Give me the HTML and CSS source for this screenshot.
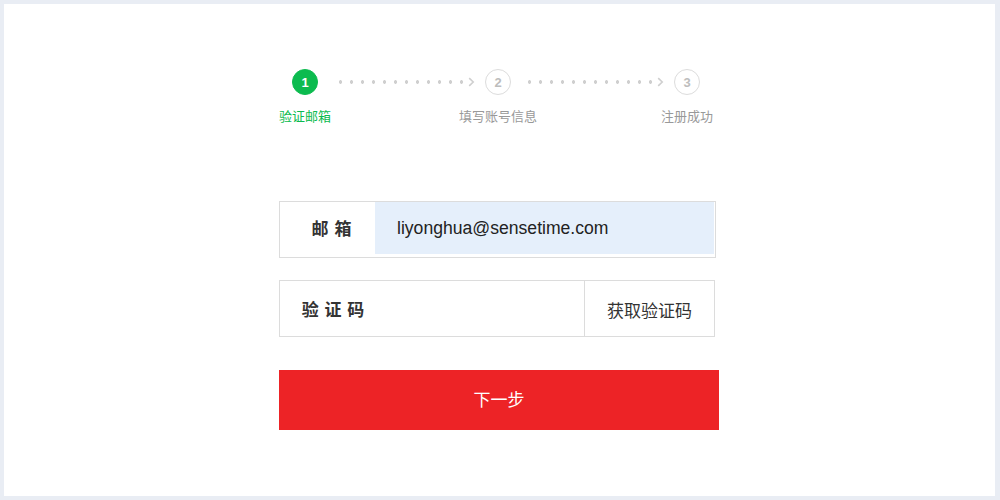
FILE: index.html
```html
<!DOCTYPE html>
<html lang="zh-CN">
<head>
<meta charset="utf-8">
<title>注册 - 验证邮箱</title>
<link rel="stylesheet" href="styles.css">
</head>
<body>
<div class="panel">
  <div class="content">
    <div class="steps">
      <div class="step active">
        <div class="circle">1</div>
        <div class="step-label">验证邮箱</div>
      </div>
      <div class="connector wide">
        <span class="dots"></span>
        <svg class="chevron" width="7" height="10" viewBox="0 0 7 10"><path d="M1.2 1.2 L5.2 5 L1.2 8.8" fill="none" stroke="#cfcfcf" stroke-width="1.6"/></svg>
      </div>
      <div class="step">
        <div class="circle">2</div>
        <div class="step-label">填写账号信息</div>
      </div>
      <div class="connector">
        <span class="dots"></span>
        <svg class="chevron" width="7" height="10" viewBox="0 0 7 10"><path d="M1.2 1.2 L5.2 5 L1.2 8.8" fill="none" stroke="#cfcfcf" stroke-width="1.6"/></svg>
      </div>
      <div class="step">
        <div class="circle">3</div>
        <div class="step-label">注册成功</div>
      </div>
    </div>

    <div class="form">
      <div class="field">
        <div class="field-label">邮 箱</div>
        <div class="field-input filled">liyonghua@sensetime.com</div>
      </div>
      <div class="field code">
        <div class="field-label">验 证 码</div>
        <div class="field-input"></div>
        <div class="code-btn">获取验证码</div>
      </div>
      <div class="submit">下一步</div>
    </div>
  </div>
</div>
</body>
</html>
```

FILE: styles.css
```css
* { box-sizing: border-box; }
html, body { margin: 0; padding: 0; }
body {
  background: #e9edf4;
  font-family: "Noto Sans CJK SC", "Noto Sans", sans-serif;
  width: 1000px;
  height: 500px;
  overflow: hidden;
}
.panel {
  margin: 4px 5px 0 4px;
  height: 492px;
  background: #fff;
  padding-top: 65px;
}
.content {
  width: 440px;
  margin-left: 275px;
}
.steps {
  display: flex;
  align-items: flex-start;
  width: 408px;
  margin-left: 13px;
}
.step {
  width: 26px;
  display: flex;
  flex-direction: column;
  align-items: center;
}
.circle {
  width: 26px;
  height: 26px;
  border-radius: 50%;
  border: 1.5px solid #dcdcdc;
  color: #bdbdbd;
  font-family: "Liberation Sans", Arial, sans-serif;
  font-weight: bold;
  font-size: 13px;
  display: flex;
  align-items: center;
  justify-content: center;
}
.step.active .circle {
  background: #0cbb4f;
  border-color: #0cbb4f;
  color: #fff;
}
.step-label {
  white-space: nowrap;
  margin-top: 12px;
  font-size: 13px;
  line-height: 18px;
  color: #999;
}
.step.active .step-label { color: #0cbb4f; }
.connector {
  flex: 1;
  height: 26px;
  display: flex;
  align-items: center;
  justify-content: flex-end;
  padding-right: 10px;
}
.connector.wide { flex: 0 0 167px; }
.dots {
  width: 132px;
  height: 4px;
  background: radial-gradient(circle at 5.5px 2px, #cfcfcf 1.5px, transparent 2px) repeat-x;
  background-size: 11px 4px;
}
.chevron { margin-left: 1px; display: block; }

.form { margin-top: 76px; }
.field {
  width: 437px;
  height: 57px;
  border: 1px solid #dcdcdc;
  display: flex;
  align-items: flex-start;
  margin-bottom: 22px;
}
.field-label {
  width: 95px;
  padding-left: 8px;
  height: 52px;
  line-height: 52px;
  text-align: center;
  font-size: 17px;
  font-weight: bold;
  word-spacing: 2px;
  color: #333;
}
.field-input {
  flex: 1;
  height: 52px;
  line-height: 52px;
  padding-left: 22px;
  font-family: "Liberation Sans", Arial, sans-serif;
  font-size: 17.6px;
  color: #222;
}
.field-input.filled {
  background: #e5effb;
  margin-right: 1px;
}
.field.code { width: 436px; align-items: stretch; }
.field.code .field-label { height: auto; line-height: 55px; padding-left: 11px; }
.field.code .field-input { height: auto; }
.code-btn {
  width: 130px;
  border-left: 1px solid #dcdcdc;
  display: flex;
  align-items: center;
  justify-content: center;
  font-size: 17px;
  color: #333;
  padding-top: 2px;
}
.submit {
  margin-top: 33px;
  height: 60px;
  padding-bottom: 3px;
  background: #ed2326;
  color: #fff;
  font-size: 17px;
  display: flex;
  align-items: center;
  justify-content: center;
}
```
